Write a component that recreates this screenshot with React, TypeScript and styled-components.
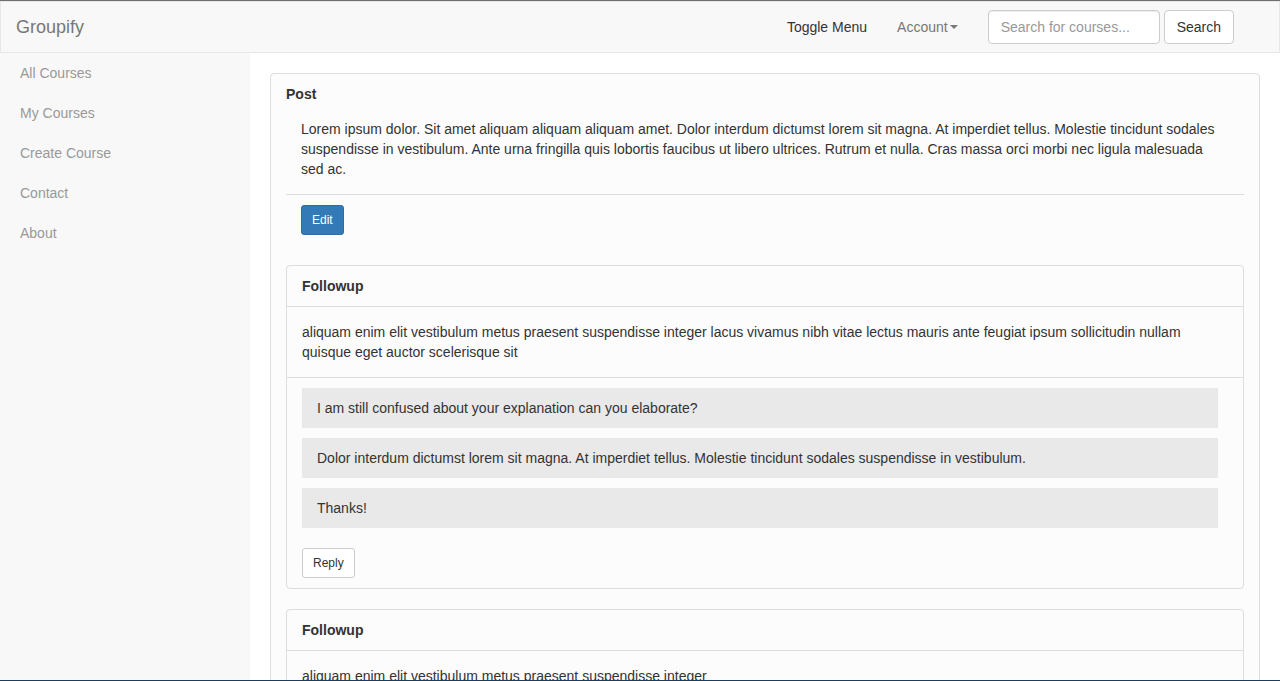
import React from "react";
import styled, { createGlobalStyle } from "styled-components";

const Global = createGlobalStyle`
  html, body { margin: 0; padding: 0; background: #fff; }
  body { font-family: "Liberation Sans", Arial, Helvetica, sans-serif; font-size: 14px; line-height: 20px; color: #333; }
  * { box-sizing: border-box; }
`;

const Frame = styled.div`
  height: 681px;
  overflow: hidden;
  display: flex;
  flex-direction: column;
  border-top: 1px solid #6e6e6e;
  border-bottom: 1px solid #1c3d5e;
`;

const Navbar = styled.nav`
  flex: 0 0 auto;
  height: 52px;
  display: flex;
  align-items: center;
  background: #f8f8f8;
  border: 1px solid #e7e7e7;
  padding: 0 45px 0 15px;
`;

const Brand = styled.a`
  font-size: 18px;
  line-height: 20px;
  color: #777;
  padding: 15px 0 15px 0;
  text-decoration: none;
`;

const NavRight = styled.div`
  margin-left: auto;
  display: flex;
  align-items: center;
`;

const NavLink = styled.a<{ $active?: boolean }>`
  padding: 15px;
  color: ${(p) => (p.$active ? "#333" : "#777")};
  text-decoration: none;
  display: flex;
  align-items: center;
`;

const Caret = styled.span`
  display: inline-block;
  width: 0;
  height: 0;
  margin-left: 2px;
  border-top: 4px solid #777;
  border-left: 4px solid transparent;
  border-right: 4px solid transparent;
`;

const SearchForm = styled.form`
  display: flex;
  gap: 4px;
  margin-left: 15px;
`;

const SearchInput = styled.input`
  width: 172px;
  height: 34px;
  padding: 6px 12px;
  font-family: inherit;
  font-size: 14px;
  color: #555;
  border: 1px solid #ccc;
  border-radius: 4px;
  background: #fff;
  box-shadow: inset 0 1px 1px rgba(0,0,0,0.075);
  &::placeholder { color: #999; }
`;

const Btn = styled.button<{ $variant?: "primary" | "default"; $size?: "sm" | "md" }>`
  font-family: inherit;
  font-size: ${(p) => (p.$size === "sm" ? "12px" : "14px")};
  line-height: ${(p) => (p.$size === "sm" ? "18px" : "20px")};
  padding: ${(p) => (p.$size === "sm" ? "5px 10px" : "6px 12px")};
  border-radius: ${(p) => (p.$size === "sm" ? "3px" : "4px")};
  border: 1px solid ${(p) => (p.$variant === "primary" ? "#2e6da4" : "#ccc")};
  background: ${(p) => (p.$variant === "primary" ? "#337ab7" : "#fff")};
  color: ${(p) => (p.$variant === "primary" ? "#fff" : "#333")};
  cursor: pointer;
  align-self: flex-start;
`;

const Body = styled.div`
  flex: 1 1 auto;
  display: flex;
  min-height: 0;
`;

const Sidebar = styled.aside`
  flex: 0 0 250px;
  background: #f8f8f8;
  display: flex;
  flex-direction: column;
`;

const SideLink = styled.a`
  padding: 10px 20px;
  color: #999;
  text-decoration: none;
`;

const Main = styled.main`
  flex: 1 1 auto;
  padding: 20px 20px 0 20px;
  background: #fff;
`;

const PostCard = styled.section`
  background: #fcfcfc;
  border: 1px solid #ddd;
  border-radius: 4px;
  padding: 10px 15px 20px 15px;
  display: flex;
  flex-direction: column;
`;

const CardTitle = styled.h3`
  margin: 0;
  font-size: 14px;
  line-height: 20px;
  font-weight: bold;
  color: #333;
`;

const PostText = styled.p`
  margin: 15px 0 0 0;
  padding: 0 15px 15px 15px;
  border-bottom: 1px solid #ddd;
`;

const ActionRow = styled.div`
  padding: 10px 15px 0 15px;
  display: flex;
`;

const Followup = styled.div`
  margin-top: 30px;
  background: #fcfcfc;
  border: 1px solid #ddd;
  border-radius: 4px;
  display: flex;
  flex-direction: column;
  & + & { margin-top: 20px; }
`;

const FollowHead = styled.div`
  padding: 10px 15px;
  border-bottom: 1px solid #ddd;
`;

const FollowText = styled.div`
  padding: 15px;
  border-bottom: 1px solid #ddd;
`;

const Comments = styled.div`
  padding: 10px 25px 10px 15px;
  display: flex;
  flex-direction: column;
  gap: 10px;
`;

const Comment = styled.div`
  background: #e9e9e9;
  padding: 10px 15px;
`;

const ReplyRow = styled.div`
  margin-top: 10px;
  display: flex;
`;

const comments = [
  "I am still confused about your explanation can you elaborate?",
  "Dolor interdum dictumst lorem sit magna. At imperdiet tellus. Molestie tincidunt sodales suspendisse in vestibulum.",
  "Thanks!",
];

export default function App() {
  return (
    <>
      <Global />
      <Frame>
        <Navbar>
          <Brand href="#">Groupify</Brand>
          <NavRight>
            <NavLink $active href="#">Toggle Menu</NavLink>
            <NavLink href="#">Account<Caret /></NavLink>
            <SearchForm onSubmit={(e) => e.preventDefault()}>
              <SearchInput placeholder="Search for courses..." />
              <Btn type="submit">Search</Btn>
            </SearchForm>
          </NavRight>
        </Navbar>
        <Body>
          <Sidebar>
            <SideLink href="#">All Courses</SideLink>
            <SideLink href="#">My Courses</SideLink>
            <SideLink href="#">Create Course</SideLink>
            <SideLink href="#">Contact</SideLink>
            <SideLink href="#">About</SideLink>
          </Sidebar>
          <Main>
            <PostCard>
              <CardTitle>Post</CardTitle>
              <PostText>
                Lorem ipsum dolor. Sit amet aliquam aliquam aliquam amet. Dolor interdum dictumst lorem sit magna. At imperdiet tellus. Molestie tincidunt sodales suspendisse in vestibulum. Ante urna fringilla quis lobortis faucibus ut libero ultrices. Rutrum et nulla. Cras massa orci morbi nec ligula malesuada sed ac.
              </PostText>
              <ActionRow>
                <Btn $variant="primary" $size="sm">Edit</Btn>
              </ActionRow>
              <Followup>
                <FollowHead><CardTitle>Followup</CardTitle></FollowHead>
                <FollowText>
                  aliquam enim elit vestibulum metus praesent suspendisse integer lacus vivamus nibh vitae lectus mauris ante feugiat ipsum sollicitudin nullam quisque eget auctor scelerisque sit
                </FollowText>
                <Comments>
                  {comments.map((c) => (
                    <Comment key={c}>{c}</Comment>
                  ))}
                  <ReplyRow>
                    <Btn $size="sm">Reply</Btn>
                  </ReplyRow>
                </Comments>
              </Followup>
              <Followup>
                <FollowHead><CardTitle>Followup</CardTitle></FollowHead>
                <FollowText>
                  aliquam enim elit vestibulum metus praesent suspendisse integer
                </FollowText>
              </Followup>
            </PostCard>
          </Main>
        </Body>
      </Frame>
    </>
  );
}
